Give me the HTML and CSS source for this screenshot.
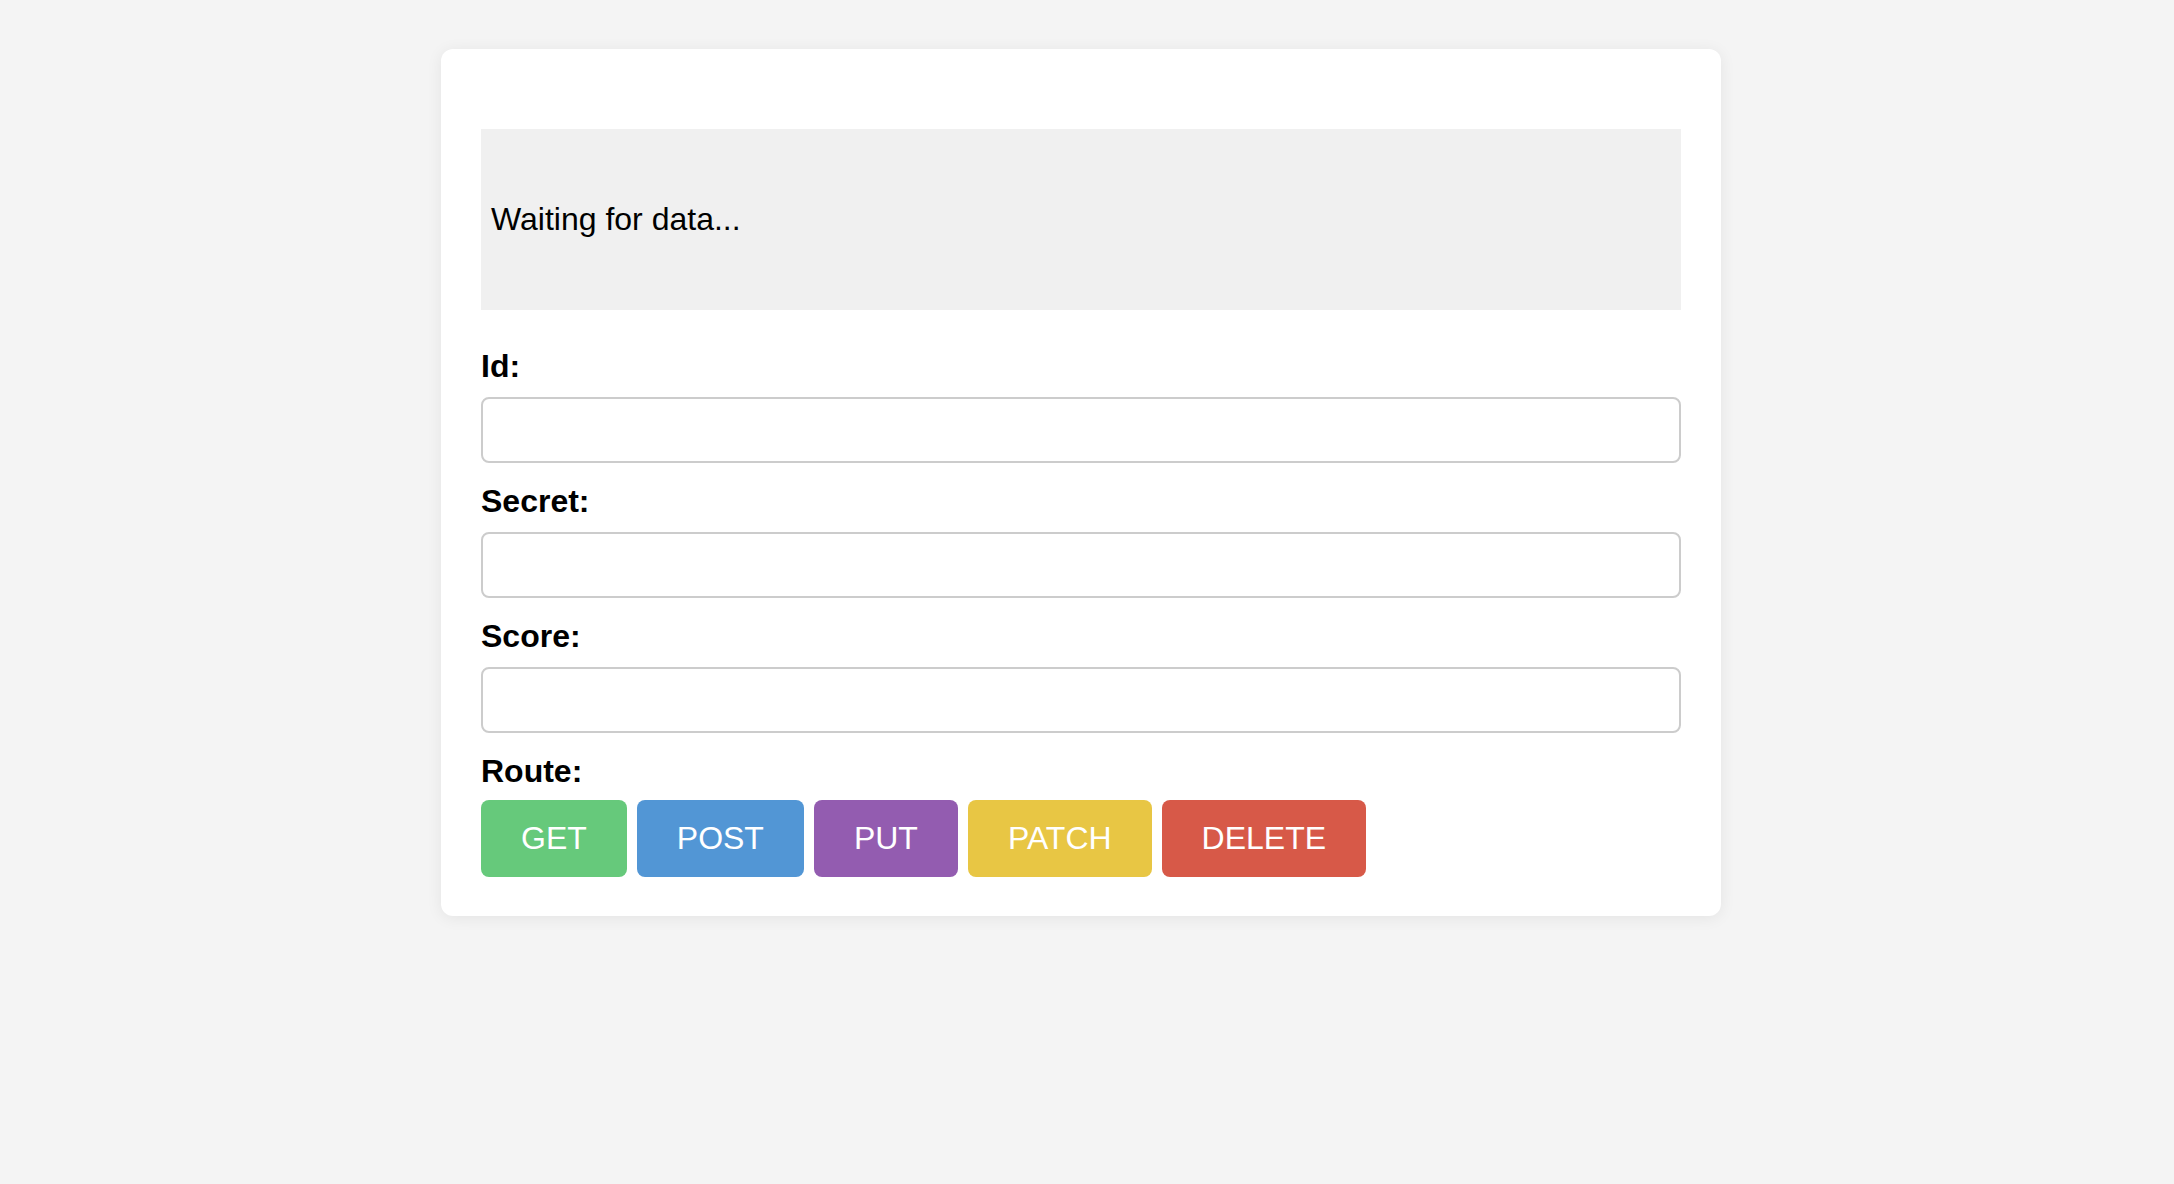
FILE: index.html
```html
<!DOCTYPE html>
<html lang="en">
<head>
<meta charset="utf-8">
<title>Route tester</title>
<link rel="stylesheet" href="styles.css">
</head>
<body>
<main class="card">
  <div class="output"><p class="output-text">Waiting for data...</p></div>
  <label class="field-label" for="id">Id:</label>
  <input class="field-input" id="id" type="text">
  <label class="field-label" for="secret">Secret:</label>
  <input class="field-input" id="secret" type="text">
  <label class="field-label" for="score">Score:</label>
  <input class="field-input" id="score" type="text">
  <div class="field-label route-label">Route:</div>
  <div class="buttons">
    <button class="btn btn-get">GET</button>
    <button class="btn btn-post">POST</button>
    <button class="btn btn-put">PUT</button>
    <button class="btn btn-patch">PATCH</button>
    <button class="btn btn-delete">DELETE</button>
  </div>
</main>
</body>
</html>
```
FILE: styles.css
```css
html, body {
  margin: 0;
  background: #f4f4f4;
  font-family: "Liberation Sans", Arial, sans-serif;
  color: #000;
}
body {
  padding: 49px 12px 0 0;
  min-height: 1184px;
  box-sizing: border-box;
}
.card {
  width: 1280px;
  box-sizing: border-box;
  margin: 0 auto;
  background: #fff;
  border-radius: 12px;
  padding: 80px 40px 39px;
  box-shadow: 0 2px 16px rgba(0, 0, 0, 0.07);
}
.output {
  background: #f0f0f0;
  padding: 72px 10px;
  height: 181px;
  box-sizing: border-box;
  margin-bottom: 38px;
}
.output-text {
  margin: 0;
  font-size: 32px;
  line-height: 37px;
}
.field-label {
  display: block;
  font-size: 32px;
  font-weight: bold;
  line-height: 37px;
  margin-bottom: 12px;
}
.route-label {
  margin-bottom: 10px;
}
.field-input {
  display: block;
  width: 100%;
  height: 66px;
  box-sizing: border-box;
  border: 2px solid #cccccc;
  border-radius: 8px;
  margin: 0 0 20px;
  padding: 10px 16px;
  font-size: 32px;
  font-family: inherit;
  background: #fff;
}
.buttons {
  display: flex;
  gap: 10px;
}
.btn {
  border: none;
  border-radius: 8px;
  color: #fff;
  font-family: inherit;
  font-size: 32px;
  line-height: 37px;
  padding: 20px 40px;
  height: 77px;
  box-sizing: border-box;
  cursor: pointer;
}
.btn-get { background: #66c97b; }
.btn-post { background: #5296d5; }
.btn-put { background: #935cb0; }
.btn-patch { background: #e8c644; }
.btn-delete { background: #d75948; }
```
